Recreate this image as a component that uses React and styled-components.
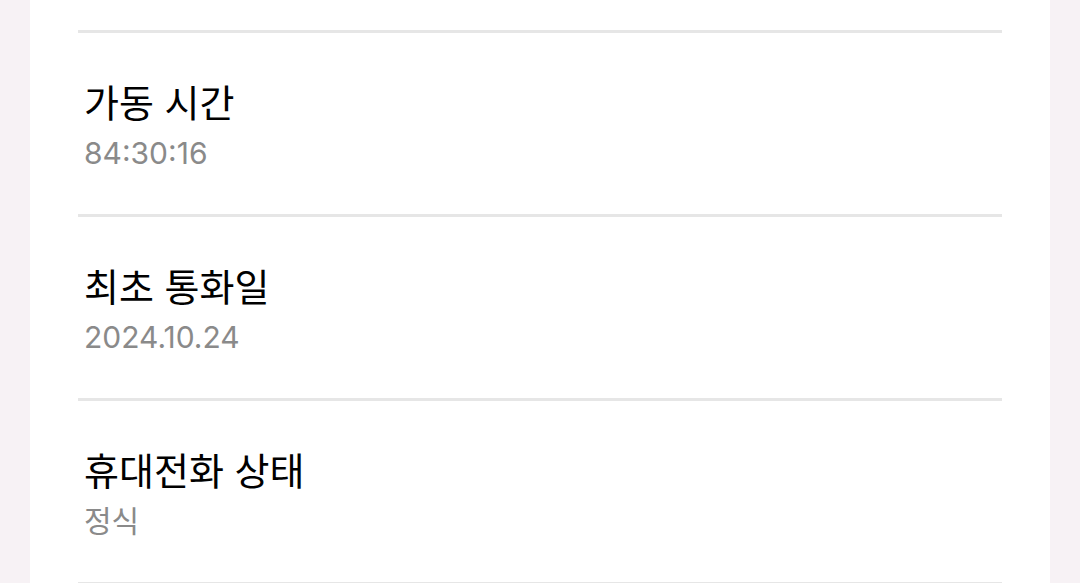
import React from "react";
import styled, { createGlobalStyle } from "styled-components";

const GlobalStyle = createGlobalStyle`
  html, body {
    margin: 0;
    padding: 0;
    background: #f7f2f5;
    overflow: hidden;
  }
  body {
    font-family: Inter, "Noto Sans CJK KR", sans-serif;
  }
`;

const items = [
  { title: "가동 시간", value: "84:30:16" },
  { title: "최초 통화일", value: "2024.10.24" },
  { title: "휴대전화 상태", value: "정식" },
];

export default function App() {
  return (
    <>
      <GlobalStyle />
      <Page>
        <Card>
          <TopSpace />
          {items.map((item) => (
            <Row key={item.title}>
              <Title>{item.title}</Title>
              <Value>{item.value}</Value>
            </Row>
          ))}
          <Divider />
        </Card>
      </Page>
    </>
  );
}

const Page = styled.div`
  height: 583px;
  padding: 0 30px;
  box-sizing: border-box;
`;

const Card = styled.div`
  background: #ffffff;
  height: 100%;
  padding: 0 48px;
  display: flex;
  flex-direction: column;
`;

const TopSpace = styled.div`
  height: 30px;
  flex-shrink: 0;
`;

const Row = styled.div`
  border-top: 3px solid #e6e6e6;
  padding: 45px 6px 0;
  height: 184px;
  box-sizing: border-box;
  flex-shrink: 0;
`;

const Title = styled.div`
  font-size: 38px;
  line-height: 50px;
  color: #000000;
  font-weight: 400;
`;

const Value = styled.div`
  margin-top: 5px;
  font-size: 30px;
  line-height: 40px;
  color: #8a8a8a;
`;

const Divider = styled.div`
  border-top: 3px solid #e6e6e6;
  flex-shrink: 0;
`;
